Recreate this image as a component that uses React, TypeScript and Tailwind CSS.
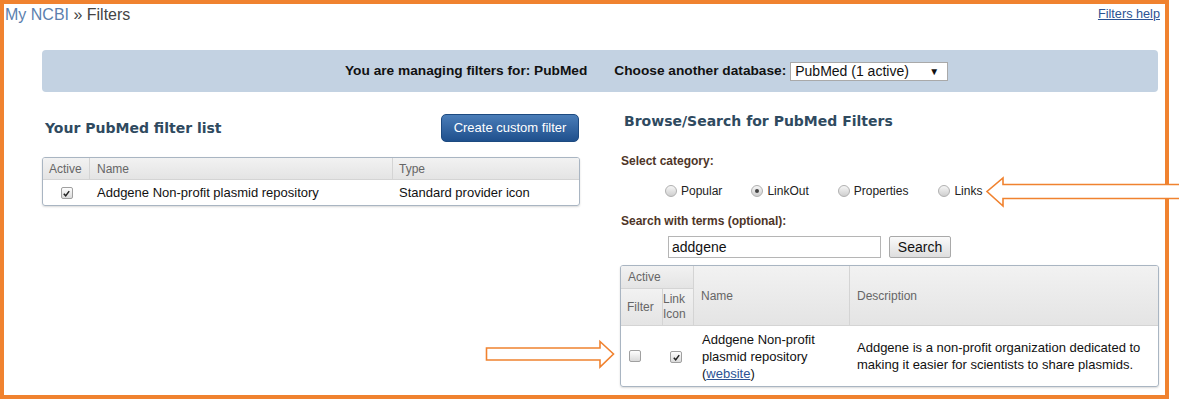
import React from "react";

function Check({ checked }: { checked?: boolean }) {
  return (
    <span className="inline-flex h-[12px] w-[12px] items-center justify-center rounded-[2px] border border-[#a0a0a0] bg-gradient-to-b from-[#fefefe] to-[#dadada]">
      {checked && (
        <svg viewBox="0 0 10 10" className="h-[9px] w-[9px]">
          <path d="M2 5.3 L4.1 7.6 L8 2.4" stroke="#222" strokeWidth="1.7" fill="none" />
        </svg>
      )}
    </span>
  );
}

function Radio({ checked, label }: { checked?: boolean; label: string }) {
  return (
    <span className="flex items-center">
      <span className="inline-flex h-[12px] w-[12px] items-center justify-center rounded-full border border-[#b0b0b0] bg-gradient-to-b from-[#f6f6f6] to-[#cfcfcf]">
        {checked && <span className="h-[4px] w-[4px] rounded-full bg-[#444]" />}
      </span>
      <span className="ml-[4px] text-[12px] text-[#222]">{label}</span>
    </span>
  );
}

const th = "border-r border-b border-[#d4d4d4] bg-gradient-to-b from-[#f2f2f2] to-[#e4e4e4] text-left align-middle font-normal text-[12px] text-[#666]";

export default function App() {
  return (
    <div className="relative h-[399px] w-[1179px] bg-white font-['Liberation_Sans',Arial,sans-serif]">
      <div className="h-[399px] w-[1169px] border-4 border-[#f0822f]">
        {/* top line */}
        <div className="flex h-[22px] items-center justify-between pl-[1px] pr-[5px]">
          <div className="text-[16px]">
            <span className="text-[#5b7fae]">My NCBI</span>
            <span className="text-[#444]"> » Filters</span>
          </div>
          <a className="text-[12.7px] text-[#2c5393] underline">Filters help</a>
        </div>

        {/* database bar */}
        <div className="ml-[38px] mt-[24px] flex h-[42px] w-[1116px] items-center rounded-[4px] bg-[#c3d2e2] pl-[303px] text-[13.7px] font-bold text-[#111]">
          <span>You are managing filters for: PubMed</span>
          <span className="ml-[27px]">Choose another database:</span>
          <span className="ml-[4px] flex h-[19px] w-[158px] items-center justify-between border border-[#a9a9a9] bg-white pl-[4px] pr-[8px] font-normal text-[14px]">
            <span>PubMed (1 active)</span>
            <span className="text-[10px]">▼</span>
          </span>
        </div>

        <div className="flex">
          {/* left column */}
          <div className="ml-[38px] mt-[22px] w-[538px]">
            <div className="flex h-[28px] items-center justify-between">
              <h2 className="pl-[3px] font-['DejaVu_Sans',Verdana,sans-serif] text-[14px] font-bold text-[#2f4a5f]">
                Your PubMed filter list
              </h2>
              <button className="mr-[1px] h-[28px] w-[138px] rounded-[5px] border border-[#1d4a80] bg-gradient-to-b from-[#4a7db8] to-[#1f508d] text-[13px] text-white">
                Create custom filter
              </button>
            </div>
            <table className="mt-[15px] w-[538px] border-separate border-spacing-0 overflow-hidden rounded-[3px] border border-[#a9b5c2] shadow-[0_1px_2px_rgba(0,0,0,0.15)]">
              <thead>
                <tr className="h-[22px]">
                  <th className={`${th} w-[47px] pl-[6px]`}>Active</th>
                  <th className={`${th} w-[303px] pl-[7px]`}>Name</th>
                  <th className={`${th} border-r-0 pl-[6px]`}>Type</th>
                </tr>
              </thead>
              <tbody>
                <tr className="h-[25px] text-[13px] text-[#111]">
                  <td className="text-center">
                    <span className="relative top-[1px] inline-flex">
                      <Check checked />
                    </span>
                  </td>
                  <td className="pl-[7px]">Addgene Non-profit plasmid repository</td>
                  <td className="pl-[6px]">Standard provider icon</td>
                </tr>
              </tbody>
            </table>
          </div>

          {/* right column */}
          <div className="ml-[40px] w-[539px]">
            <h2 className="mt-[19px] h-[18px] pl-[4px] font-['DejaVu_Sans',Verdana,sans-serif] text-[14px] font-bold text-[#2f4a5f]">
              Browse/Search for PubMed Filters
            </h2>
            <div className="mt-[23px] h-[16px] pl-[1px] text-[12px] font-bold text-[#4e3527]">Select category:</div>
            <div className="mt-[15px] flex h-[16px] items-center pl-[45px]">
              <Radio label="Popular" />
              <span className="ml-[29px]"><Radio checked label="LinkOut" /></span>
              <span className="ml-[29px]"><Radio label="Properties" /></span>
              <span className="ml-[30px]"><Radio label="Links" /></span>
            </div>
            <div className="mt-[13px] h-[16px] pl-[1px] text-[12px] font-bold text-[#4e3527]">Search with terms (optional):</div>
            <div className="mt-[8px] flex h-[22px] items-center pl-[48px]">
              <span className="flex h-[22px] w-[213px] items-center border border-[#b5b5b5] pl-[3px] text-[14px] text-[#111]">addgene</span>
              <button className="ml-[8px] h-[22px] w-[62px] rounded-[2px] border border-[#a9a9a9] bg-gradient-to-b from-[#fafafa] to-[#dedede] text-[14px] text-[#111]">
                Search
              </button>
            </div>
            <table className="mt-[7px] w-[539px] table-fixed border-separate border-spacing-0 overflow-hidden rounded-[3px] border border-[#a9b5c2] shadow-[0_1px_2px_rgba(0,0,0,0.15)]">
              <colgroup>
                <col className="w-[42px]" />
                <col className="w-[31px]" />
                <col className="w-[156px]" />
                <col />
              </colgroup>
              <thead>
                <tr className="h-[23px]">
                  <th colSpan={2} className={`${th} pl-[7px]`}>Active</th>
                  <th rowSpan={2} className={`${th} pl-[7px]`}>Name</th>
                  <th rowSpan={2} className={`${th} border-r-0 pl-[7px]`}>Description</th>
                </tr>
                <tr className="h-[37px]">
                  <th className={`${th} pl-[6px]`}>Filter</th>
                  <th className={`${th} text-center leading-[15px]`}>
                    Link
                    <br />
                    Icon
                  </th>
                </tr>
              </thead>
              <tbody>
                <tr className="h-[60px] text-[13px] leading-[17px] text-[#111]">
                  <td className="pl-[8px]">
                    <span className="relative top-[1px] inline-flex"><Check /></span>
                  </td>
                  <td className="pl-[7px]">
                    <span className="relative top-[1px] inline-flex"><Check checked /></span>
                  </td>
                  <td className="pl-[8px]">
                    Addgene Non-profit
                    <br />
                    plasmid repository
                    <br />
                    (<a className="text-[#2c5393] underline">website</a>)
                  </td>
                  <td className="pl-[7px]">
                    Addgene is a non-profit organization dedicated to
                    <br />
                    making it easier for scientists to share plasmids.
                  </td>
                </tr>
              </tbody>
            </table>
          </div>
        </div>
      </div>

      {/* annotation arrows */}
      <svg className="absolute left-[984px] top-[175px]" width="195" height="36" viewBox="0 0 195 36">
        <path d="M195 9.5 H19 V3 L3 16.5 L19 31 V23.5 H195" fill="white" stroke="#f0822f" strokeWidth="1.6" />
      </svg>
      <svg className="absolute left-[484px] top-[339px]" width="132" height="31" viewBox="0 0 132 31">
        <path d="M2.5 9 H116 V2.5 L129.5 15 L116 28 V21 H2.5 Z" fill="white" stroke="#f0822f" strokeWidth="1.6" />
      </svg>
    </div>
  );
}
